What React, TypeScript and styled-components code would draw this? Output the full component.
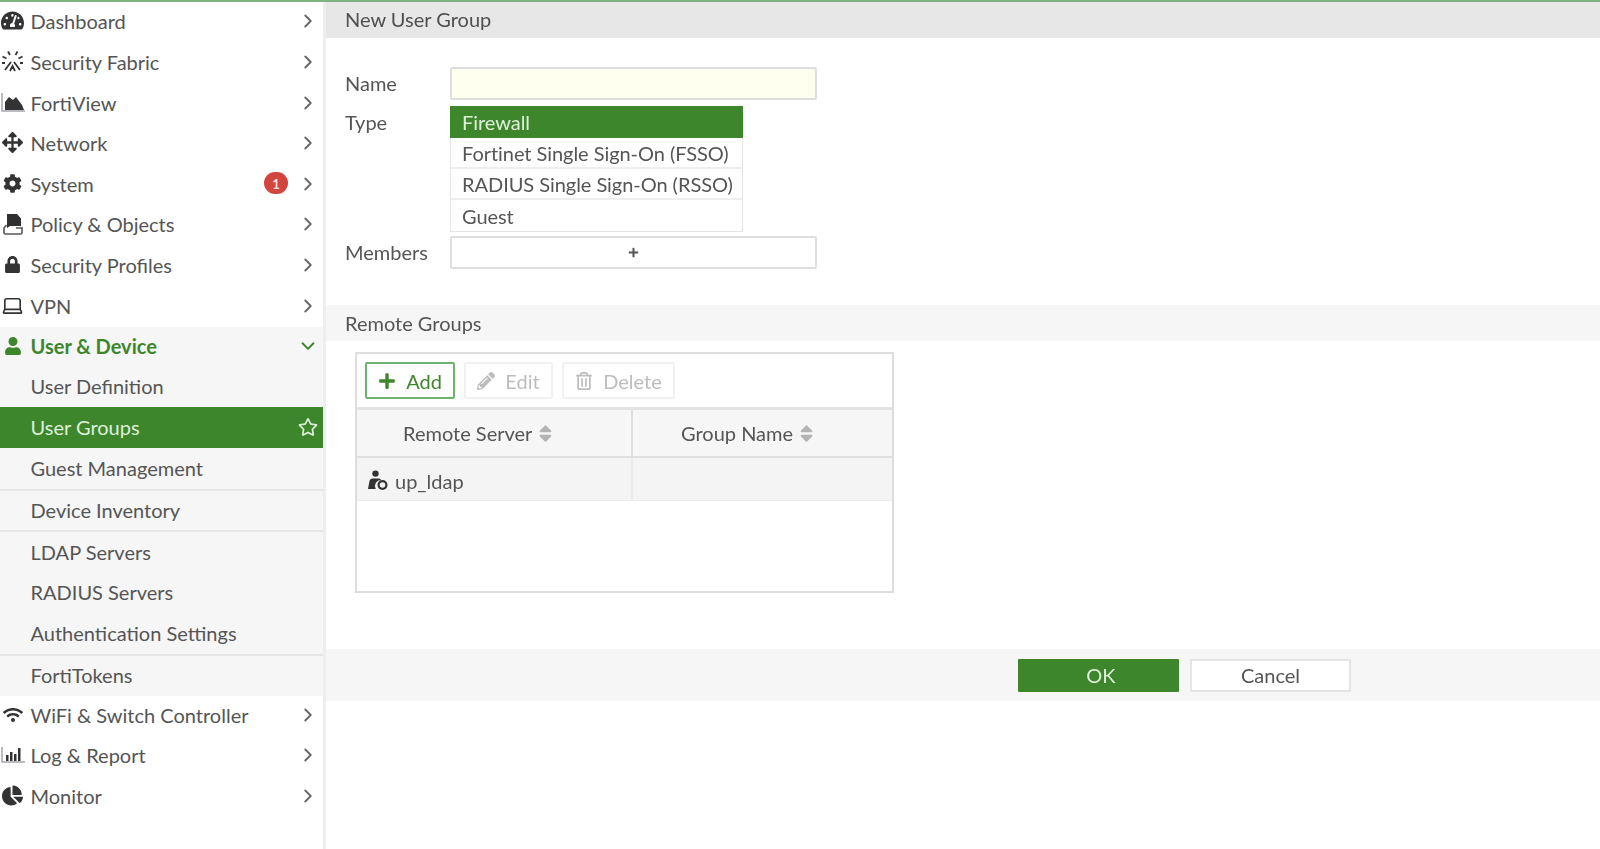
import React from "react";
import styled, { createGlobalStyle } from "styled-components";
import {
  FaTachometerAlt, FaArrowsAlt, FaCog, FaLock, FaUser, FaWifi,
  FaChartPie, FaRegStar, FaPencilAlt, FaRegTrashAlt, FaSort, FaPlus,
} from "react-icons/fa";
import { Laptop, ChevronRight, ChevronDown } from "lucide-react";

const Global = createGlobalStyle`
  html, body { margin: 0; padding: 0; background: #fff; }
  body { font-family: Lato, "Open Sans", sans-serif; color: #555; }
`;

const Page = styled.div`
  width: 1600px;
  height: 849px;
  overflow: hidden;
  border-top: 2px solid #7cb380;
  box-sizing: border-box;
  display: flex;
  filter: blur(0.55px);
  font-size: 20px;
`;

const Sidebar = styled.nav`
  width: 323px;
  flex: none;
  border-right: 3px solid #eeeeee;
`;

const Row = styled.div<{ $h?: number; $sub?: boolean; $open?: boolean; $active?: boolean; $rule?: boolean }>`
  height: ${(p) => p.$h ?? 40.625}px;
  display: flex;
  align-items: center;
  padding-left: ${(p) => (p.$sub ? 30.5 : 0)}px;
  background: ${(p) => (p.$active ? "#3d862c" : p.$sub || p.$open ? "#f6f6f6" : "#fff")};
  color: ${(p) => (p.$active ? "#dff0da" : p.$open ? "#3d862c" : "#555")};
  font-weight: ${(p) => (p.$open ? 700 : 400)};
  border-bottom: ${(p) => (p.$rule ? "2px solid #e6e6e6" : "0")};
`;

const IconSlot = styled.span<{ $color?: string }>`
  width: 30.5px;
  flex: none;
  display: flex;
  align-items: center;
  justify-content: center;
  padding-right: 5px;
  margin-top: -3px;
  box-sizing: border-box;
  color: ${(p) => p.$color ?? "#333"};
`;

const Label = styled.span`
  flex: 1;
  white-space: nowrap;
  margin-top: -2px;
`;

const Badge = styled.span`
  width: 24px;
  height: 22px;
  margin-top: -3px;
  border-radius: 11px;
  background: #d2453f;
  color: #f8dedd;
  font-size: 14px;
  font-weight: 700;
  display: flex;
  align-items: center;
  justify-content: center;
  margin-right: 9px;
`;

const Caret = styled.span<{ $color?: string }>`
  width: 22px;
  margin-right: 4px;
  margin-top: -2px;
  flex: none;
  display: flex;
  justify-content: center;
  color: ${(p) => p.$color ?? "#666"};
`;

const Main = styled.main`
  flex: 1;
  min-width: 0;
`;

const Title = styled.h1`
  margin: 0;
  height: 36px;
  padding: 0 0 2px 19px;
  box-sizing: border-box;
  background: #e7e7e7;
  display: flex;
  align-items: center;
  font-size: 20px;
  font-weight: 400;
  color: #4f4f4f;
`;

const Form = styled.section`
  padding: 29px 0 0 19px;
  display: grid;
  grid-template-columns: 105px 366.5px;
  align-items: start;
`;

const FieldLabel = styled.label<{ $top?: number }>`
  line-height: 33px;
  margin-top: ${(p) => p.$top ?? 0}px;
`;

const NameInput = styled.div`
  height: 33px;
  box-sizing: border-box;
  background: #fffff0;
  border: 2px solid #dedede;
  border-radius: 2px;
`;

const TypeList = styled.div`
  margin-top: 6px;
  width: 293px;
  height: 126px;
  box-sizing: border-box;
  border: 1px solid #e4e4e4;
  border-top: 0;
  display: grid;
  grid-template-rows: 32px 31px 31px 1fr;
  letter-spacing: -0.05px;
`;

const TypeOption = styled.div<{ $on?: boolean }>`
  margin: ${(p) => (p.$on ? "0 -1px" : "0")};
  padding-left: ${(p) => (p.$on ? 12 : 11)}px;
  padding-bottom: ${(p) => (p.$on ? 1 : 0)}px;
  display: flex;
  align-items: center;
  white-space: nowrap;
  background: ${(p) => (p.$on ? "#3d862c" : "#fff")};
  color: ${(p) => (p.$on ? "#dff0da" : "#555")};
  border-bottom: ${(p) => (p.$on ? "0" : "2px solid #eeeeee")};
  &:last-child { border-bottom: 0; }
`;

const MembersBox = styled.div`
  margin-top: 4px;
  height: 33px;
  box-sizing: border-box;
  border: 2px solid #dedede;
  border-radius: 2px;
  display: flex;
  align-items: center;
  justify-content: center;
  color: #555;
`;

const SectionBand = styled.h2`
  margin: 36px 0 0;
  height: 36px;
  padding-left: 19px;
  background: #f6f6f6;
  display: flex;
  align-items: center;
  font-size: 20px;
  font-weight: 400;
  color: #555;
`;

const TableBox = styled.div`
  margin: 11px 0 0 29px;
  width: 539px;
  height: 241px;
  box-sizing: border-box;
  border: 2px solid #dddddd;
`;

const Toolbar = styled.div`
  height: 56px;
  box-sizing: border-box;
  padding: 8px 0 0 8px;
  display: flex;
  gap: 9px;
  align-items: flex-start;
  border-bottom: 3px solid #e2e2e2;
`;

const ToolButton = styled.div<{ $w: number; $primary?: boolean; $gap: number }>`
  width: ${(p) => p.$w}px;
  height: 37px;
  box-sizing: border-box;
  border: 2px solid ${(p) => (p.$primary ? "#6fb26f" : "#f1f1f1")};
  border-radius: 2px;
  display: flex;
  align-items: center;
  justify-content: center;
  gap: ${(p) => p.$gap}px;
  color: ${(p) => (p.$primary ? "#3d862c" : "#bdbdbd")};
`;

const ColGrid = styled.div`
  display: grid;
  grid-template-columns: 276px 1fr;
`;

const HeadRow = styled(ColGrid)`
  height: 48px;
  background: #f6f6f6;
  border-bottom: 2px solid #dfdfdf;
  box-sizing: border-box;
`;

const HeadCell = styled.div<{ $pad: number; $rule?: boolean }>`
  display: flex;
  align-items: center;
  gap: 3px;
  padding-left: ${(p) => p.$pad}px;
  border-right: ${(p) => (p.$rule ? "2px solid #dfdfdf" : "0")};
  color: #555;
`;

const SortIcon = styled.span`
  display: flex;
  color: #b4b4b4;
`;

const BodyRow = styled(ColGrid)`
  height: 43px;
  background: #f4f4f4;
  box-sizing: border-box;
  border-bottom: 1px solid #ececec;
`;

const BodyCell = styled.div<{ $rule?: boolean }>`
  display: flex;
  align-items: center;
  gap: 7px;
  padding: 3px 0 0 10px;
  border-right: ${(p) => (p.$rule ? "2px solid #ebebeb" : "0")};
`;

const Footer = styled.div`
  margin-top: 56px;
  height: 52px;
  background: #f6f6f6;
  padding-left: 692px;
  display: flex;
  align-items: center;
  gap: 11px;
`;

const FooterButton = styled.div<{ $primary?: boolean }>`
  width: 161px;
  height: 33px;
  box-sizing: border-box;
  border-radius: 1px;
  display: flex;
  align-items: center;
  justify-content: center;
  padding-bottom: 1px;
  padding-left: ${(p) => (p.$primary ? 5 : 0)}px;
  background: ${(p) => (p.$primary ? "#3d862c" : "#fff")};
  color: ${(p) => (p.$primary ? "#dff0da" : "#555")};
  border: ${(p) => (p.$primary ? "0" : "2px solid #e4e4e4")};
`;

const FabricIcon = () => (
  <svg width="23" height="23" viewBox="0 0 23 23" fill="none" stroke="#333" strokeWidth="1.8">
    <path d="M7 1.500l2 3.500M16.500 1.500l-2 3.500M1.500 6.500l4 2M21.500 6.500l-4 2M1 13h3M19 13h3M4 20l6-8M19 20l-6-8M9 21l2.500-5 2.500 5" />
  </svg>
);

const ViewIcon = () => (
  <svg width="24" height="22" viewBox="0 0 24 22">
    <path d="M1 2v18h23" fill="none" stroke="#a9a4ad" strokeWidth="1.5" />
    <path d="M4 19V11l4-5 4 3 3-3 6 8 2 5z" fill="#333" />
  </svg>
);

const PolicyIcon = () => (
  <svg width="22" height="22" viewBox="0 0 22 22">
    <path d="M5 1h10l4 4.500V13H8l-3 2z" fill="#2f2f2f" />
    <path d="M4.500 12L2 15v4.500c0 .8.700 1.500 1.500 1.500h15c.8 0 1.500-.7 1.500-1.500V15h-6" fill="none" stroke="#555" strokeWidth="1.6" />
  </svg>
);

const ReportIcon = () => (
  <svg width="24" height="22" viewBox="0 0 24 22">
    <path d="M1 3v15h23" fill="none" stroke="#a9a4ad" strokeWidth="1.5" />
    <path d="M5 11h2.500v6H5zM9 8h2.500v9H9zM13 10h2.500v7H13zM17 4h2.500v13H17z" fill="#333" />
  </svg>
);

const UserGroupIcon = () => (
  <svg width="21" height="21" viewBox="0 0 21 21" fill="#333">
    <circle cx="8.500" cy="3.600" r="3.200" />
    <path d="M1 19l1.500-8c.3-1.500 1.500-2.500 3-2.500h6c1.200 0 2.200.6 2.800 1.500A6 6 0 0 0 8.800 19z" />
    <circle cx="15.500" cy="15" r="5" />
    <circle cx="15.500" cy="15" r="2.800" fill="#f4f4f4" />
  </svg>
);

const ForwardCaret = () => (
  <Caret>
    <ChevronRight size={22} strokeWidth={2} />
  </Caret>
);

type Item = { label: string; icon?: React.ReactNode; badge?: boolean };

const top: Item[] = [
  { label: "Dashboard", icon: <FaTachometerAlt size={23} /> },
  { label: "Security Fabric", icon: <FabricIcon /> },
  { label: "FortiView", icon: <ViewIcon /> },
  { label: "Network", icon: <FaArrowsAlt size={21} /> },
  { label: "System", icon: <FaCog size={19} />, badge: true },
  { label: "Policy & Objects", icon: <PolicyIcon /> },
  { label: "Security Profiles", icon: <FaLock size={17} /> },
  { label: "VPN", icon: <Laptop size={23} strokeWidth={1.7} /> },
];

const bottom: Item[] = [
  { label: "WiFi & Switch Controller", icon: <FaWifi size={20} /> },
  { label: "Log & Report", icon: <ReportIcon /> },
  { label: "Monitor", icon: <FaChartPie size={21} /> },
];

const MenuRow = ({ item }: { item: Item }) => (
  <Row $h={40.3}>
    <IconSlot>{item.icon}</IconSlot>
    <Label>{item.label}</Label>
    <ForwardCaret />
  </Row>
);

const TopRow = ({ item }: { item: Item }) => (
  <Row>
    <IconSlot>{item.icon}</IconSlot>
    <Label>{item.label}</Label>
    {item.badge && <Badge>1</Badge>}
    <ForwardCaret />
  </Row>
);

export default function App() {
  return (
    <>
      <Global />
      <Page>
        <Sidebar>
          {top.map((item) => (
            <TopRow key={item.label} item={item} />
          ))}
          <Row $open $h={40}>
            <IconSlot $color="#3d862c"><FaUser size={18} /></IconSlot>
            <Label>User &amp; Device</Label>
            <Caret $color="#3d862c"><ChevronDown size={22} strokeWidth={2} /></Caret>
          </Row>
          <Row $sub $h={40}><Label>User Definition</Label></Row>
          <Row $sub $active $h={41}>
            <Label>User Groups</Label>
            <Caret $color="#dff0da"><FaRegStar size={20} /></Caret>
          </Row>
          <Row $sub $h={41} $rule><Label>Guest Management</Label></Row>
          <Row $sub $h={39} $rule><Label>Device Inventory</Label></Row>
          <Row $sub $h={41}><Label>LDAP Servers</Label></Row>
          <Row $sub $h={40}><Label>RADIUS Servers</Label></Row>
          <Row $sub $h={41} $rule><Label>Authentication Settings</Label></Row>
          <Row $sub $h={40}><Label>FortiTokens</Label></Row>
          {bottom.map((item) => (
            <MenuRow key={item.label} item={item} />
          ))}
        </Sidebar>
        <Main>
          <Title>New User Group</Title>
          <Form>
            <FieldLabel>Name</FieldLabel>
            <NameInput />
            <FieldLabel $top={6}>Type</FieldLabel>
            <TypeList>
              <TypeOption $on>Firewall</TypeOption>
              <TypeOption>Fortinet Single Sign-On (FSSO)</TypeOption>
              <TypeOption>RADIUS Single Sign-On (RSSO)</TypeOption>
              <TypeOption>Guest</TypeOption>
            </TypeList>
            <FieldLabel $top={4}>Members</FieldLabel>
            <MembersBox><FaPlus size={11} /></MembersBox>
          </Form>
          <SectionBand>Remote Groups</SectionBand>
          <TableBox>
            <Toolbar>
              <ToolButton $w={90} $gap={10} $primary><FaPlus size={18} />Add</ToolButton>
              <ToolButton $w={89} $gap={10}><FaPencilAlt size={18} />Edit</ToolButton>
              <ToolButton $w={113} $gap={10}><FaRegTrashAlt size={18} />Delete</ToolButton>
            </Toolbar>
            <HeadRow>
              <HeadCell $pad={46} $rule>Remote Server <SortIcon><FaSort size={21} /></SortIcon></HeadCell>
              <HeadCell $pad={48}>Group Name <SortIcon><FaSort size={21} /></SortIcon></HeadCell>
            </HeadRow>
            <BodyRow>
              <BodyCell $rule><UserGroupIcon />up_ldap</BodyCell>
              <BodyCell />
            </BodyRow>
          </TableBox>
          <Footer>
            <FooterButton $primary>OK</FooterButton>
            <FooterButton>Cancel</FooterButton>
          </Footer>
        </Main>
      </Page>
    </>
  );
}
